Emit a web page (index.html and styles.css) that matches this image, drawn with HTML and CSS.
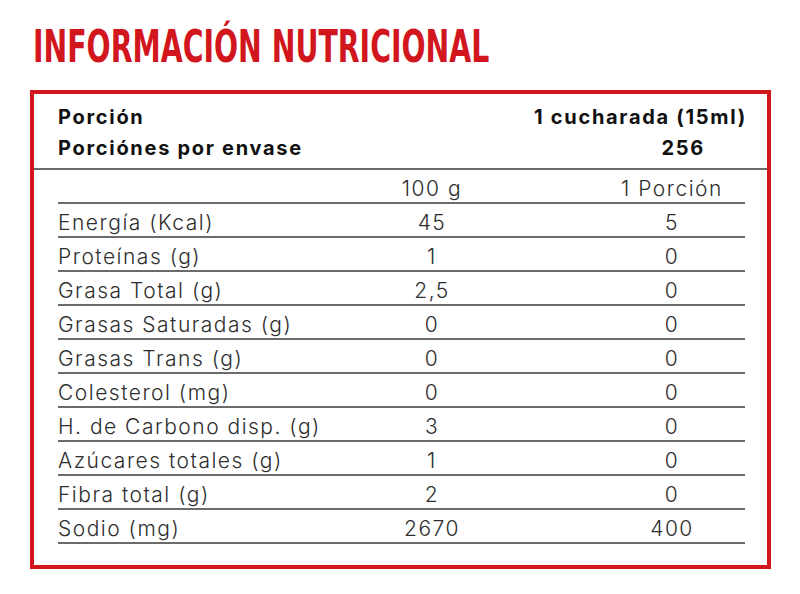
FILE: index.html
```html
<!DOCTYPE html>
<html lang="es">
<head>
<meta charset="utf-8">
<link rel="stylesheet" href="styles.css">
</head>
<body>
<h1 class="title"><span class="title-text">INFORMACIÓN NUTRICIONAL</span></h1>
<div class="box">
  <div class="serving">
    <div class="serving-row"><span>Porción</span><span>1 cucharada (15ml)</span></div>
    <div class="serving-row"><span>Porciónes por envase</span><span class="count">256</span></div>
  </div>
  <div class="table">
    <div class="row head"><span class="c1"></span><span class="c2">100 g</span><span class="c3">1 Porción</span></div>
    <div class="row"><span class="c1">Energía (Kcal)</span><span class="c2">45</span><span class="c3">5</span></div>
    <div class="row"><span class="c1">Proteínas (g)</span><span class="c2">1</span><span class="c3">0</span></div>
    <div class="row"><span class="c1">Grasa Total (g)</span><span class="c2">2,5</span><span class="c3">0</span></div>
    <div class="row"><span class="c1">Grasas Saturadas (g)</span><span class="c2">0</span><span class="c3">0</span></div>
    <div class="row"><span class="c1">Grasas Trans (g)</span><span class="c2">0</span><span class="c3">0</span></div>
    <div class="row"><span class="c1">Colesterol (mg)</span><span class="c2">0</span><span class="c3">0</span></div>
    <div class="row"><span class="c1">H. de Carbono disp. (g)</span><span class="c2">3</span><span class="c3">0</span></div>
    <div class="row"><span class="c1">Azúcares totales (g)</span><span class="c2">1</span><span class="c3">0</span></div>
    <div class="row"><span class="c1">Fibra total (g)</span><span class="c2">2</span><span class="c3">0</span></div>
    <div class="row"><span class="c1">Sodio (mg)</span><span class="c2">2670</span><span class="c3">400</span></div>
  </div>
</div>
</body>
</html>
```

FILE: styles.css
```css
html, body {
  margin: 0;
  padding: 0;
  background: #ffffff;
}
body {
  width: 800px;
  height: 594px;
  overflow: hidden;
  font-family: "Inter", "Lato", "Liberation Sans", sans-serif;
  color: #2e2e2e;
}
.title {
  margin: 0;
  padding: 25px 0 0 33px;
  height: 90px;
  box-sizing: border-box;
  font-family: "DejaVu Sans", sans-serif;
  font-stretch: condensed;
  font-weight: 700;
  font-size: 44px;
  line-height: 44px;
  color: #d2161d;
}
.title-text {
  display: inline-block;
  transform-origin: 0 0;
  transform: scaleX(0.716);
  white-space: nowrap;
}
.box {
  margin-left: 30px;
  width: 741px;
  height: 479px;
  box-sizing: border-box;
  border: 4px solid #d2161d;
}
.serving {
  padding: 8px 20px 4px 24px;
  border-bottom: 2px solid #6b6b6b;
  font-weight: 700;
  font-size: 20px;
  letter-spacing: 1.7px;
  color: #111;
}
.serving-row {
  display: flex;
  justify-content: space-between;
  height: 31px;
  line-height: 31px;
}
.count {
  padding-right: 42px;
}
.table {
  margin: 0 22px 0 24px;
  font-weight: 300;
  font-size: 21px;
  letter-spacing: 1.5px;
}
.row {
  display: grid;
  grid-template-columns: 299px 150px 1fr;
  height: 34px;
  padding-top: 6px;
  line-height: 26px;
  box-sizing: border-box;
  border-bottom: 2px solid #6b6b6b;
}
.c1 {
  white-space: nowrap;
}
.c2 {
  text-align: center;
}
.c3 {
  text-align: center;
  padding-left: 92px;
}
```
